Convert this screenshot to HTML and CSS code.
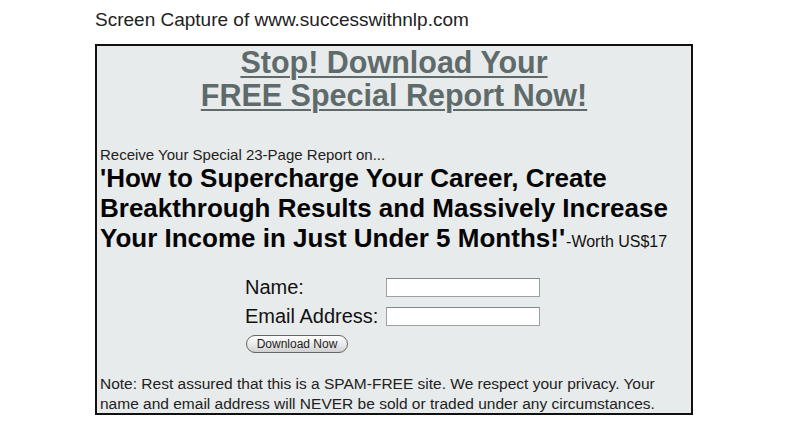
FILE: index.html
```html
<!DOCTYPE html>
<html>
<head>
<meta charset="utf-8">
<link rel="stylesheet" href="styles.css">
</head>
<body>
<div class="page">
  <p class="caption">Screen Capture of www.successwithnlp.com</p>
  <div class="box">
    <h1 class="headline"><a href="#">Stop! Download Your<br>FREE Special Report Now!</a></h1>
    <p class="intro">Receive Your Special 23-Page Report on...</p>
    <p class="title">'How to Supercharge Your Career, Create Breakthrough Results and Massively Increase Your Income in Just Under 5 Months!'<span class="worth">-Worth US$17</span></p>
    <form class="form">
      <label class="row"><span class="lbl">Name:</span><input class="field" type="text"></label>
      <label class="row"><span class="lbl">Email Address:</span><input class="field" type="text"></label>
      <button class="btn" type="button">Download Now</button>
    </form>
    <p class="note">Note: Rest assured that this is a SPAM-FREE site. We respect your privacy. Your name and email address will NEVER be sold or traded under any circumstances.</p>
  </div>
</div>
</body>
</html>
```
FILE: styles.css
```css
html, body {
  margin: 0;
  padding: 0;
  background: #ffffff;
}
body {
  font-family: "Liberation Sans", Arial, sans-serif;
  color: #111;
}
.page {
  padding: 9px 0 0 95px;
}
.caption {
  margin: 0;
  font-size: 19px;
  line-height: 22px;
  color: #222;
}
.box {
  margin-top: 13px;
  width: 591px;
  height: 367px;
  border: 2px solid #111;
  background: #e8ebeb;
  padding: 0 0 0 3px;
  box-sizing: content-box;
}
.headline {
  margin: 0 0 0 -3px;
  text-align: center;
  font-size: 30.5px;
  line-height: 33px;
  font-weight: bold;
}
.headline a {
  color: #5f6b6b;
  text-decoration: underline;
  text-decoration-thickness: 2px;
  text-underline-offset: 3px;
}
.intro {
  margin: 35px 0 0 0;
  font-size: 15px;
  line-height: 16px;
  color: #222;
}
.title {
  margin: 0;
  font-size: 26px;
  line-height: 30px;
  font-weight: bold;
  color: #050505;
  width: 590px;
}
.worth {
  margin-left: 1px;
  font-size: 16px;
  line-height: 1;
  font-weight: normal;
  color: #111;
}
.form {
  margin: 20px 0 0 145px;
  display: flex;
  flex-direction: column;
  align-items: flex-start;
}
.row {
  display: flex;
  align-items: center;
  height: 29px;
}
.lbl {
  width: 141px;
  font-size: 20px;
  line-height: 23px;
  color: #111;
}
.field {
  width: 154px;
  height: 19px;
  box-sizing: border-box;
  border: 1px solid #99a3a3;
  border-top-color: #7f8989;
  background: #fff;
  padding: 0;
  margin: 0;
}
.btn {
  margin-top: 4px;
  margin-left: 1px;
  width: 102px;
  height: 18px;
  padding: 0;
  font-family: "Liberation Sans", Arial, sans-serif;
  font-size: 12px;
  color: #222;
  border: 1px solid #666;
  border-radius: 9px;
  background: linear-gradient(#ffffff, #e6e6e6 60%, #d0d0d0);
}
.note {
  margin: 21px 0 0 0;
  font-size: 15.5px;
  line-height: 19.5px;
  color: #222;
}
```
